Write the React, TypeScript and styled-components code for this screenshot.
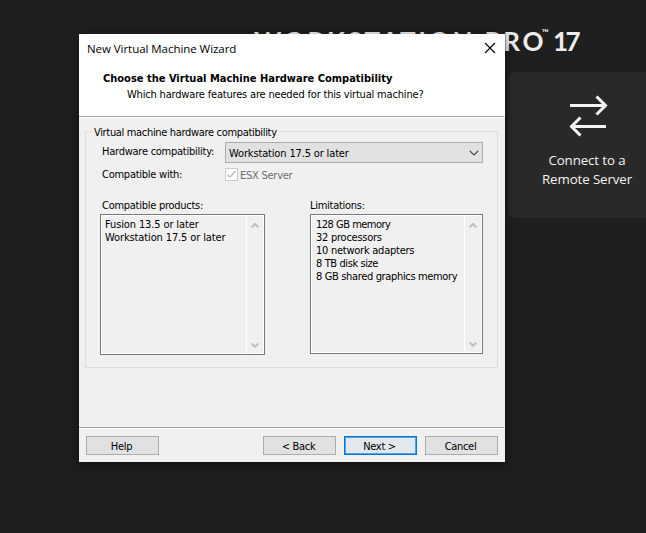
import React from 'react';
import styled, { createGlobalStyle } from 'styled-components';

const GlobalStyle = createGlobalStyle`
  * { box-sizing: border-box; }
  body { margin: 0; background: #1f1f1f; overflow: hidden; }
`;

const dialogFont = '"DejaVu Sans Condensed", "DejaVu Sans", Tahoma, sans-serif';
const shellFont = '"Open Sans", "Segoe UI", sans-serif';

const Desktop = styled.div`
  position: relative;
  width: 646px;
  height: 533px;
  overflow: hidden;
  background: #1f1f1f;
  color: #fff;
`;

const Home = styled.main`
  display: flex;
  flex-direction: column;
  padding: 24px 0 0 254px;
`;

const Brand = styled.h1`
  display: flex;
  align-items: flex-start;
  margin: 0;
  height: 48px;
  color: #ececec;
  font: 700 26px/34px Lato, sans-serif;
  white-space: nowrap;
`;

const BrandName = styled.span`
  width: 288px;
  letter-spacing: 2.75px;
`;

const Trademark = styled.sup`
  width: 11px;
  font-size: 9px;
  font-weight: bold;
  line-height: 12px;
  margin-top: 3px;
`;

const Version = styled.span`
  letter-spacing: -2.5px;
`;

const Tile = styled.section`
  display: flex;
  flex-direction: column;
  align-items: center;
  align-self: flex-start;
  width: 158px;
  height: 146px;
  margin-left: 254px;
  padding-top: 23px;
  border-radius: 6px;
  background: #292929;
`;

const TransferIcon = styled.svg`
  margin-left: 4px;
`;

const TileLabel = styled.div`
  margin-top: 14px;
  color: #f4f4f4;
  font: 13.3px/19px ${shellFont};
  letter-spacing: -0.1px;
  text-align: center;
`;

const Dialog = styled.div`
  position: absolute;
  left: 79px;
  top: 34px;
  width: 426px;
  height: 428px;
  display: flex;
  flex-direction: column;
  background: #f0f0f0;
  color: #000;
  font: 11px/13px ${dialogFont};
  letter-spacing: -0.2px;
  white-space: nowrap;
  box-shadow: 0 3px 12px rgba(0, 0, 0, 0.45);
`;

const TitleBar = styled.header`
  display: flex;
  align-items: center;
  justify-content: space-between;
  height: 29px;
  padding: 0 9px 0 8px;
  background: #fff;
  font: 11.5px/16px ${shellFont};
  letter-spacing: -0.05px;
`;

const CloseIcon = styled.svg`
  margin-bottom: 1px;
`;

const Banner = styled.div`
  height: 53px;
  padding: 9px 0 0 24px;
  background: #fff;
`;

const Heading = styled.div`
  font-weight: bold;
  letter-spacing: 0;
  line-height: 14px;
`;

const Subheading = styled.div`
  margin: 2px 0 0 24px;
  letter-spacing: -0.18px;
  line-height: 14px;
`;

const Divider = styled.div`
  height: 2px;
  margin-right: 1px;
  background: linear-gradient(#a0a0a0 50%, #fff 50%);
`;

const Body = styled.div`
  flex: 1;
  padding: 7px 7px 0 6px;
`;

const Group = styled.fieldset`
  height: 243px;
  margin: 0;
  padding: 0 14px;
  border: 1px solid #dcdcdc;
  min-width: 0;
`;

const Legend = styled.legend`
  margin-left: -8px;
  padding: 1px 2px 0;
  height: 13px;
  letter-spacing: -0.33px;
`;

const Field = styled.div<{ $height: number }>`
  display: flex;
  align-items: center;
  height: ${p => p.$height}px;
`;

const FieldLabel = styled.label<{ $lift?: number }>`
  width: 125px;
  padding: 0 0 ${p => p.$lift ?? 0}px 2px;
  letter-spacing: -0.25px;
`;

const Select = styled.div`
  display: flex;
  align-items: center;
  justify-content: space-between;
  width: 258px;
  height: 21px;
  padding: 2px 3px 0;
  border: 1px solid #adadad;
  background: #e1e1e1;
  letter-spacing: -0.15px;
`;

const SelectArrow = styled.svg`
  margin-bottom: 1px;
`;

const Checkbox = styled.span`
  display: flex;
  width: 13px;
  height: 13px;
  margin-right: 2px;
  border: 1px solid #ccc;
  background: #fff;
`;

const DisabledText = styled.span`
  padding-top: 2px;
  color: #6d6d6d;
  letter-spacing: -0.25px;
`;

const Columns = styled.div`
  display: flex;
  justify-content: space-between;
  margin-top: 17px;
`;

const Column = styled.div<{ $width: number }>`
  width: ${p => p.$width}px;
`;

const ColumnTitle = styled.div<{ $indent: number }>`
  height: 15px;
  padding-left: ${p => p.$indent}px;
  letter-spacing: -0.27px;
`;

const ListBox = styled.div<{ $height: number }>`
  display: flex;
  height: ${p => p.$height}px;
  border: 1px solid #7a7a7a;
  box-shadow: inset 0 0 0 1px #fff;
`;

const Items = styled.ul<{ $indent: number }>`
  flex: 1;
  margin: 0;
  padding: 3px 0 0 ${p => p.$indent}px;
  list-style: none;
  overflow: hidden;
`;

const Item = styled.li<{ $spacing: number }>`
  height: 13px;
  letter-spacing: ${p => p.$spacing}px;
`;

const ScrollTrack = styled.div`
  display: flex;
  flex-direction: column;
  justify-content: space-between;
  align-items: center;
  width: 18px;
  padding: 7px 2px 5px 0;
  border-left: 1px solid #fff;
`;

const Footer = styled.footer`
  display: flex;
  height: 33px;
  padding: 7px 7px 0;
`;

const Button = styled.button<{ $primary?: boolean; $gap?: number }>`
  width: 73px;
  height: 19px;
  margin: 0 0 0 ${p => p.$gap ?? 0}px;
  padding: 1px 2px 0 0;
  border: 1px solid ${p => (p.$primary ? '#0078d7' : '#adadad')};
  box-shadow: ${p => (p.$primary ? 'inset 0 0 0 1px #55a3e0' : 'none')};
  background: ${p => (p.$primary ? '#e3e8ec' : '#e1e1e1')};
  color: #000;
  font: inherit;
  letter-spacing: -0.3px;
`;

const Chevron = ({ up = false }: { up?: boolean }) => (
  <svg width="8" height="7" viewBox="0 0 8 7" fill="none" stroke="#bfbfbf" strokeWidth="2">
    <path d={up ? 'M.7 5.3 4 2l3.3 3.3' : 'M.7 1.5 4 4.8l3.3-3.3'} />
  </svg>
);

const ScrollBar = () => (
  <ScrollTrack>
    <Chevron up />
    <Chevron />
  </ScrollTrack>
);

const limitations: [string, number][] = [
  ['128 GB memory', -0.5],
  ['32 processors', -0.25],
  ['10 network adapters', -0.25],
  ['8 TB disk size', -0.4],
  ['8 GB shared graphics memory', -0.35],
];

export default function App() {
  return (
    <Desktop>
      <GlobalStyle />
      <Home>
        <Brand>
          <BrandName>WORKSTATION PRO</BrandName>
          <Trademark>™</Trademark>
          <Version>17</Version>
        </Brand>
        <Tile>
          <TransferIcon width="40" height="42" viewBox="0 0 40 42" fill="none" stroke="#f4f4f4" strokeWidth="3">
            <path d="M1 10.500h36M27.500 1.500l9 9-9 9M37 31.500H2M11.500 22.500l-9 9 9 9" />
          </TransferIcon>
          <TileLabel>
            Connect to a
            <br />
            Remote Server
          </TileLabel>
        </Tile>
      </Home>

      <Dialog role="dialog">
        <TitleBar>
          <span>New Virtual Machine Wizard</span>
          <CloseIcon width="12" height="12" viewBox="0 0 12 12" stroke="#000" strokeWidth="1.1">
            <path d="m1 1 10 10M11 1 1 11" />
          </CloseIcon>
        </TitleBar>
        <Banner>
          <Heading>Choose the Virtual Machine Hardware Compatibility</Heading>
          <Subheading>Which hardware features are needed for this virtual machine?</Subheading>
        </Banner>
        <Divider />
        <Body>
          <Group>
            <Legend>Virtual machine hardware compatibility</Legend>
            <Field $height={28}>
              <FieldLabel $lift={1}>Hardware compatibility:</FieldLabel>
              <Select>
                Workstation 17.5 or later
                <SelectArrow width="10" height="6" viewBox="0 0 10 6" fill="none" stroke="#444" strokeWidth="1.2">
                  <path d="m.8.8 4.200 4.200L9.200.8" />
                </SelectArrow>
              </Select>
            </Field>
            <Field $height={16}>
              <FieldLabel>Compatible with:</FieldLabel>
              <Checkbox>
                <svg width="11" height="11" viewBox="0 0 11 11" fill="none" stroke="#bcbcbc" strokeWidth="1.3">
                  <path d="m1.500 5.500 2.500 2.500 5.500-6" />
                </svg>
              </Checkbox>
              <DisabledText>ESX Server</DisabledText>
            </Field>
            <Columns>
              <Column $width={165}>
                <ColumnTitle $indent={2}>Compatible products:</ColumnTitle>
                <ListBox $height={141}>
                  <Items $indent={4}>
                    <Item $spacing={-0.12}>Fusion 13.5 or later</Item>
                    <Item $spacing={-0.12}>Workstation 17.5 or later</Item>
                  </Items>
                  <ScrollBar />
                </ListBox>
              </Column>
              <Column $width={173}>
                <ColumnTitle $indent={0}>Limitations:</ColumnTitle>
                <ListBox $height={140}>
                  <Items $indent={5}>
                    {limitations.map(([text, spacing]) => (
                      <Item key={text} $spacing={spacing}>{text}</Item>
                    ))}
                  </Items>
                  <ScrollBar />
                </ListBox>
              </Column>
            </Columns>
          </Group>
        </Body>
        <Divider />
        <Footer>
          <Button>Help</Button>
          <Button $gap={104}>&lt; Back</Button>
          <Button $primary $gap={8}>Next &gt;</Button>
          <Button $gap={8}>Cancel</Button>
        </Footer>
      </Dialog>
    </Desktop>
  );
}
